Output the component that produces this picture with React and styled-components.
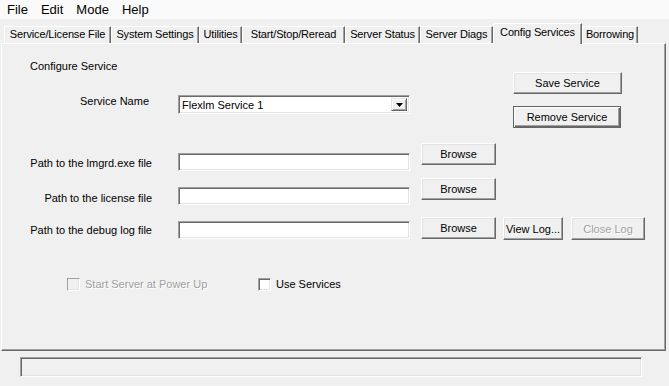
import styled, { createGlobalStyle } from "styled-components";

const GlobalStyle = createGlobalStyle`
  html, body {
    margin: 0;
    padding: 0;
    background: #f0f0f0;
  }
  body {
    font-family: "Liberation Sans", Arial, sans-serif;
    font-size: 11px;
    color: #000;
  }
`

const Window = styled.div`
  width: 669px;
  height: 386px;
  display: flex;
  flex-direction: column;
  background: #f0f0f0;
  overflow: hidden;
`

const MenuBar = styled.div`
  height: 19px;
  display: flex;
  align-items: center;
  gap: 13px;
  padding-left: 7px;
  background: #fafafa;
  font-size: 13px;
`

const TabStrip = styled.div`
  height: 24px;
  display: flex;
  align-items: flex-end;
  padding-left: 4px;
`

const Tab = styled.div`
  box-sizing: border-box;
  width: ${(p) => p.$w}px;
  height: ${(p) => (p.$active ? 21 : 17)}px;
  margin-bottom: ${(p) => (p.$active ? -1 : 0)}px;
  position: relative;
  z-index: ${(p) => (p.$active ? 2 : 1)};
  background: #f0f0f0;
  border-top: 1px solid #fff;
  border-left: 1px solid #fff;
  border-right: 1px solid #696969;
  box-shadow: inset -1px 0 #a0a0a0;
  text-align: center;
  line-height: ${(p) => (p.$active ? 17 : 15)}px;
  letter-spacing: -0.15px;
  white-space: nowrap;
`

const Panel = styled.div`
  box-sizing: border-box;
  margin: 0 3px 0 1px;
  height: 308px;
  padding-top: 16px;
  border-top: 1px solid #fff;
  border-left: 1px solid #fff;
  border-right: 1px solid #696969;
  border-bottom: 1px solid #696969;
  box-shadow: inset -1px -1px #a0a0a0;
  display: flex;
  flex-direction: column;
`

const Header = styled.div`
  display: flex;
  justify-content: space-between;
  align-items: flex-start;
`

const HeaderLeft = styled.div`
  display: flex;
  flex-direction: column;
`

const Title = styled.div`
  margin-left: 28px;
  line-height: 13px;
`

const ButtonStack = styled.div`
  margin-top: 12px;
  margin-right: 43px;
  display: flex;
  flex-direction: column;
  gap: 12px;
`

const Row = styled.div`
  display: flex;
  align-items: flex-start;
  margin-top: ${(p) => p.$mt}px;
`

const Label = styled.div`
  box-sizing: border-box;
  width: 150px;
  padding-right: ${(p) => p.$pr || 0}px;
  margin-top: ${(p) => p.$dy || 0}px;
  text-align: right;
  line-height: 13px;
  white-space: nowrap;
`

const sunken = `
  box-sizing: border-box;
  border-top: 1px solid #a0a0a0;
  border-left: 1px solid #a0a0a0;
  border-bottom: 1px solid #fff;
  border-right: 1px solid #fff;
  box-shadow: inset 1px 1px #696969, inset -1px -1px #e3e3e3;
`

const TextBox = styled.div`
  ${sunken}
  width: 232px;
  height: 18px;
  margin-left: 26px;
  margin-top: ${(p) => p.$dy || 0}px;
  background: #fff;
`

const Select = styled.div`
  ${sunken}
  width: 232px;
  height: 19px;
  margin-left: 26px;
  background: #fff;
  display: flex;
  align-items: stretch;
  padding: 2px;
`

const SelectValue = styled.div`
  flex: 1;
  padding-left: 1px;
  line-height: 15px;
`

const DropButton = styled.div`
  box-sizing: border-box;
  width: 16px;
  background: #f0f0f0;
  border-top: 1px solid #e3e3e3;
  border-left: 1px solid #e3e3e3;
  border-right: 1px solid #696969;
  border-bottom: 1px solid #696969;
  box-shadow: inset 1px 1px #fff, inset -1px -1px #a0a0a0;
  display: flex;
  align-items: center;
  justify-content: center;
`

const Button = styled.div`
  box-sizing: border-box;
  width: ${(p) => p.$w}px;
  height: ${(p) => p.$h || 22}px;
  margin-left: ${(p) => p.$ml || 0}px;
  background: #f0f0f0;
  display: flex;
  align-items: center;
  justify-content: center;
  white-space: nowrap;
  color: ${(p) => (p.$disabled ? "#a0a0a0" : "#000")};
  text-shadow: ${(p) => (p.$disabled ? "1px 1px #fff" : "none")};
  ${(p) =>
    p.$default
      ? `
    border: 1px solid #646464;
    box-shadow: inset 1px 1px #fff, inset -1px -1px #696969, inset -2px -2px #a0a0a0;
  `
      : `
    border-top: 1px solid #fff;
    border-left: 1px solid #fff;
    border-right: 1px solid #696969;
    border-bottom: 1px solid #696969;
    box-shadow: inset -1px -1px #a0a0a0, inset 1px 1px #e3e3e3;
  `}
`

const CheckRow = styled.div`
  display: grid;
  grid-template-columns: 191px auto;
  margin-top: 38px;
  padding-left: 65px;
`

const CheckItem = styled.div`
  display: flex;
  align-items: center;
  gap: 5px;
  line-height: 13px;
  color: ${(p) => (p.$disabled ? "#a0a0a0" : "#000")};
  text-shadow: ${(p) => (p.$disabled ? "1px 1px #fff" : "none")};
`

const CheckBox = styled.div`
  ${sunken}
  width: 13px;
  height: 13px;
  background: ${(p) => (p.$disabled ? "#f0f0f0" : "#fff")};
  box-shadow: ${(p) =>
    p.$disabled ? "inset -1px -1px #e3e3e3" : "inset 1px 1px #696969, inset -1px -1px #e3e3e3"};
`

const StatusBar = styled.div`
  ${sunken}
  margin: 6px 27px 0 20px;
  height: 20px;
  background: #f0f0f0;
`

const menus = ["File", "Edit", "Mode", "Help"];

const tabs = [
  { label: "Service/License File", w: 107 },
  { label: "System Settings", w: 88 },
  { label: "Utilities", w: 43 },
  { label: "Start/Stop/Reread", w: 103 },
  { label: "Server Status", w: 75 },
  { label: "Server Diags", w: 73 },
  { label: "Config Services", w: 89, active: true },
  { label: "Borrowing", w: 56 },
];

const paths = [
  { label: "Path to the lmgrd.exe file", mt: 15, labelDy: 14, boxDy: 10 },
  { label: "Path to the license file", mt: 7, labelDy: 14, boxDy: 9 },
  { label: "Path to the debug log file", mt: 12, labelDy: 7, boxDy: 4, log: true },
];

function Arrow() {
  return (
    <svg width="7" height="4" viewBox="0 0 7 4">
      <path d="M0 0H7L3.5 4Z" fill="#000" />
    </svg>
  );
}

export default function App() {
  return (
    <Window>
      <GlobalStyle />
      <MenuBar>
        {menus.map((m) => (
          <span key={m}>{m}</span>
        ))}
      </MenuBar>
      <TabStrip>
        {tabs.map((t) => (
          <Tab key={t.label} $w={t.w} $active={t.active}>
            {t.label}
          </Tab>
        ))}
      </TabStrip>
      <Panel>
        <Header>
          <HeaderLeft>
            <Title>Configure Service</Title>
            <Row $mt={22}>
              <Label $pr={3}>Service Name</Label>
              <Select>
                <SelectValue>Flexlm Service 1</SelectValue>
                <DropButton>
                  <Arrow />
                </DropButton>
              </Select>
            </Row>
          </HeaderLeft>
          <ButtonStack>
            <Button $w={109}>Save Service</Button>
            <Button $w={108} $default>
              Remove Service
            </Button>
          </ButtonStack>
        </Header>

        {paths.map((p) => (
          <Row key={p.label} $mt={p.mt}>
            <Label $dy={p.labelDy}>{p.label}</Label>
            <TextBox $dy={p.boxDy} />
            <Button $w={75} $ml={11}>
              Browse
            </Button>
            {p.log && (
              <>
                <Button $w={60} $h={23} $ml={7}>
                  View Log...
                </Button>
                <Button $w={74} $h={23} $ml={8} $disabled>
                  Close Log
                </Button>
              </>
            )}
          </Row>
        ))}

        <CheckRow>
          <CheckItem $disabled>
            <CheckBox $disabled />
            Start Server at Power Up
          </CheckItem>
          <CheckItem>
            <CheckBox />
            Use Services
          </CheckItem>
        </CheckRow>
      </Panel>
      <StatusBar />
    </Window>
  );
}
